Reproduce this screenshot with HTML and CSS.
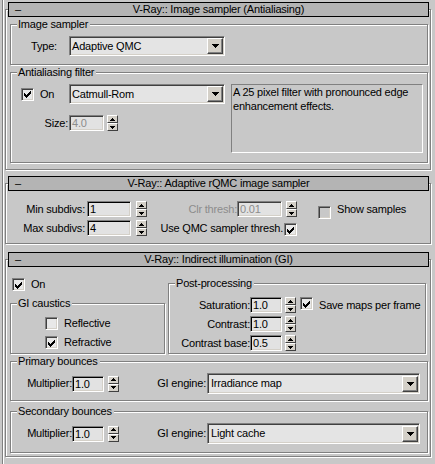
FILE: index.html
```html
<!DOCTYPE html>
<html>
<head>
<meta charset="utf-8">
<title>V-Ray</title>
<link rel="stylesheet" href="styles.css">
</head>
<body>
<div class="panel">

  <section class="rollout r1">
    <div class="rtitle"><span class="collapse">–</span><span class="rtext">V-Ray:: Image sampler (Antialiasing)</span><span></span></div>
    <div class="group g-is">
      <div class="legend">Image sampler</div>
      <div class="type-row">
        <span class="type-lbl">Type:</span>
        <div class="dropdown dd-aa"><span class="dd-text">Adaptive QMC</span><span class="dd-btn"><svg width="7" height="4" viewBox="0 0 7 4"><rect x="0" y="0" width="7" height="1"/><rect x="1" y="1" width="5" height="1"/><rect x="2" y="2" width="3" height="1"/><rect x="3" y="3" width="1" height="1"/></svg></span></div>
      </div>
    </div>
    <div class="group g-aa">
      <div class="legend">Antialiasing filter</div>
      <div class="aa-body">
        <div class="aa-grid">
          <div class="chk-row aa-on"><span class="cb"><svg class="check" width="7" height="7" viewBox="0 0 7 7"><rect x="0" y="2" width="1" height="3"/><rect x="1" y="3" width="1" height="3"/><rect x="2" y="4" width="1" height="3"/><rect x="3" y="3" width="1" height="3"/><rect x="4" y="2" width="1" height="3"/><rect x="5" y="1" width="1" height="3"/><rect x="6" y="0" width="1" height="3"/></svg></span><span class="cb-text">On</span></div>
          <div class="dropdown dd-aa"><span class="dd-text">Catmull-Rom</span><span class="dd-btn"><svg width="7" height="4" viewBox="0 0 7 4"><rect x="0" y="0" width="7" height="1"/><rect x="1" y="1" width="5" height="1"/><rect x="2" y="2" width="3" height="1"/><rect x="3" y="3" width="1" height="1"/></svg></span></div>
          <span class="flabel">Size:</span>
          <div class="spin-field">
            <span class="field f-size disabled">4.0</span>
            <span class="spinner ml3"><span class="sp"><svg width="5" height="3" viewBox="0 0 5 3"><rect x="2" y="0" width="1" height="1"/><rect x="1" y="1" width="3" height="1"/><rect x="0" y="2" width="5" height="1"/></svg></span><span class="sp"><svg width="5" height="3" viewBox="0 0 5 3"><rect x="0" y="0" width="5" height="1"/><rect x="1" y="1" width="3" height="1"/><rect x="2" y="2" width="1" height="1"/></svg></span></span>
          </div>
        </div>
        <div class="desc">A 25 pixel filter with pronounced edge<br>enhancement effects.</div>
      </div>
    </div>
  </section>

  <section class="rollout r2">
    <div class="rtitle"><span class="collapse">–</span><span class="rtext">V-Ray:: Adaptive rQMC image sampler</span><span></span></div>
    <div class="qmc">
      <div class="qrow">
        <span class="flabel w79">Min subdivs:</span>
        <span class="field f-sub">1</span>
        <span class="spinner ml5"><span class="sp"><svg width="5" height="3" viewBox="0 0 5 3"><rect x="2" y="0" width="1" height="1"/><rect x="1" y="1" width="3" height="1"/><rect x="0" y="2" width="5" height="1"/></svg></span><span class="sp"><svg width="5" height="3" viewBox="0 0 5 3"><rect x="0" y="0" width="5" height="1"/><rect x="1" y="1" width="3" height="1"/><rect x="2" y="2" width="1" height="1"/></svg></span></span>
        <span class="flabel w90 dis">Clr thresh:</span>
        <span class="field f-clr disabled">0.01</span>
        <span class="spinner ml4"><span class="sp"><svg width="5" height="3" viewBox="0 0 5 3"><rect x="2" y="0" width="1" height="1"/><rect x="1" y="1" width="3" height="1"/><rect x="0" y="2" width="5" height="1"/></svg></span><span class="sp"><svg width="5" height="3" viewBox="0 0 5 3"><rect x="0" y="0" width="5" height="1"/><rect x="1" y="1" width="3" height="1"/><rect x="2" y="2" width="1" height="1"/></svg></span></span>
        <span class="cb cb-off show-cb"></span><span class="cb-text">Show samples</span>
      </div>
      <div class="qrow">
        <span class="flabel w79">Max subdivs:</span>
        <span class="field f-sub">4</span>
        <span class="spinner ml5"><span class="sp"><svg width="5" height="3" viewBox="0 0 5 3"><rect x="2" y="0" width="1" height="1"/><rect x="1" y="1" width="3" height="1"/><rect x="0" y="2" width="5" height="1"/></svg></span><span class="sp"><svg width="5" height="3" viewBox="0 0 5 3"><rect x="0" y="0" width="5" height="1"/><rect x="1" y="1" width="3" height="1"/><rect x="2" y="2" width="1" height="1"/></svg></span></span>
        <span class="qmc-use"><span>Use QMC sampler thresh.</span><span class="cb use-cb"><svg class="check" width="7" height="7" viewBox="0 0 7 7"><rect x="0" y="2" width="1" height="3"/><rect x="1" y="3" width="1" height="3"/><rect x="2" y="4" width="1" height="3"/><rect x="3" y="3" width="1" height="3"/><rect x="4" y="2" width="1" height="3"/><rect x="5" y="1" width="1" height="3"/><rect x="6" y="0" width="1" height="3"/></svg></span></span>
      </div>
    </div>
  </section>

  <section class="rollout r3">
    <div class="rtitle"><span class="collapse">–</span><span class="rtext">V-Ray:: Indirect illumination (GI)</span><span></span></div>
    <div class="gi-top">
      <div class="gi-left">
        <div class="chk-row gi-on"><span class="cb"><svg class="check" width="7" height="7" viewBox="0 0 7 7"><rect x="0" y="2" width="1" height="3"/><rect x="1" y="3" width="1" height="3"/><rect x="2" y="4" width="1" height="3"/><rect x="3" y="3" width="1" height="3"/><rect x="4" y="2" width="1" height="3"/><rect x="5" y="1" width="1" height="3"/><rect x="6" y="0" width="1" height="3"/></svg></span><span class="cb-text">On</span></div>
        <div class="group g-caus">
          <div class="legend">GI caustics</div>
          <div class="chk-row caus-row first"><span class="cb"></span><span class="cb-text">Reflective</span></div>
          <div class="chk-row caus-row"><span class="cb"><svg class="check" width="7" height="7" viewBox="0 0 7 7"><rect x="0" y="2" width="1" height="3"/><rect x="1" y="3" width="1" height="3"/><rect x="2" y="4" width="1" height="3"/><rect x="3" y="3" width="1" height="3"/><rect x="4" y="2" width="1" height="3"/><rect x="5" y="1" width="1" height="3"/><rect x="6" y="0" width="1" height="3"/></svg></span><span class="cb-text">Refractive</span></div>
        </div>
      </div>
      <div class="group g-post">
        <div class="legend">Post-processing</div>
        <div class="prow first">
          <span class="flabel w81">Saturation:</span>
          <span class="field f-post">1.0</span>
          <span class="spinner ml3"><span class="sp"><svg width="5" height="3" viewBox="0 0 5 3"><rect x="2" y="0" width="1" height="1"/><rect x="1" y="1" width="3" height="1"/><rect x="0" y="2" width="5" height="1"/></svg></span><span class="sp"><svg width="5" height="3" viewBox="0 0 5 3"><rect x="0" y="0" width="5" height="1"/><rect x="1" y="1" width="3" height="1"/><rect x="2" y="2" width="1" height="1"/></svg></span></span>
          <span class="cb save-cb"><svg class="check" width="7" height="7" viewBox="0 0 7 7"><rect x="0" y="2" width="1" height="3"/><rect x="1" y="3" width="1" height="3"/><rect x="2" y="4" width="1" height="3"/><rect x="3" y="3" width="1" height="3"/><rect x="4" y="2" width="1" height="3"/><rect x="5" y="1" width="1" height="3"/><rect x="6" y="0" width="1" height="3"/></svg></span><span class="cb-text">Save maps per frame</span>
        </div>
        <div class="prow">
          <span class="flabel w81">Contrast:</span>
          <span class="field f-post">1.0</span>
          <span class="spinner ml3"><span class="sp"><svg width="5" height="3" viewBox="0 0 5 3"><rect x="2" y="0" width="1" height="1"/><rect x="1" y="1" width="3" height="1"/><rect x="0" y="2" width="5" height="1"/></svg></span><span class="sp"><svg width="5" height="3" viewBox="0 0 5 3"><rect x="0" y="0" width="5" height="1"/><rect x="1" y="1" width="3" height="1"/><rect x="2" y="2" width="1" height="1"/></svg></span></span>
        </div>
        <div class="prow">
          <span class="flabel w81">Contrast base:</span>
          <span class="field f-post">0.5</span>
          <span class="spinner ml3"><span class="sp"><svg width="5" height="3" viewBox="0 0 5 3"><rect x="2" y="0" width="1" height="1"/><rect x="1" y="1" width="3" height="1"/><rect x="0" y="2" width="5" height="1"/></svg></span><span class="sp"><svg width="5" height="3" viewBox="0 0 5 3"><rect x="0" y="0" width="5" height="1"/><rect x="1" y="1" width="3" height="1"/><rect x="2" y="2" width="1" height="1"/></svg></span></span>
        </div>
      </div>
    </div>

    <div class="group g-prim">
      <div class="legend">Primary bounces</div>
      <div class="brow">
        <span class="flabel w61">Multiplier:</span>
        <span class="field f-post">1.0</span>
        <span class="spinner ml4"><span class="sp"><svg width="5" height="3" viewBox="0 0 5 3"><rect x="2" y="0" width="1" height="1"/><rect x="1" y="1" width="3" height="1"/><rect x="0" y="2" width="5" height="1"/></svg></span><span class="sp"><svg width="5" height="3" viewBox="0 0 5 3"><rect x="0" y="0" width="5" height="1"/><rect x="1" y="1" width="3" height="1"/><rect x="2" y="2" width="1" height="1"/></svg></span></span>
        <span class="flabel w88">GI engine:</span>
        <div class="dropdown dd-gi"><span class="dd-text">Irradiance map</span><span class="dd-btn"><svg width="7" height="4" viewBox="0 0 7 4"><rect x="0" y="0" width="7" height="1"/><rect x="1" y="1" width="5" height="1"/><rect x="2" y="2" width="3" height="1"/><rect x="3" y="3" width="1" height="1"/></svg></span></div>
      </div>
    </div>

    <div class="group g-sec">
      <div class="legend">Secondary bounces</div>
      <div class="brow">
        <span class="flabel w61">Multiplier:</span>
        <span class="field f-post">1.0</span>
        <span class="spinner ml4"><span class="sp"><svg width="5" height="3" viewBox="0 0 5 3"><rect x="2" y="0" width="1" height="1"/><rect x="1" y="1" width="3" height="1"/><rect x="0" y="2" width="5" height="1"/></svg></span><span class="sp"><svg width="5" height="3" viewBox="0 0 5 3"><rect x="0" y="0" width="5" height="1"/><rect x="1" y="1" width="3" height="1"/><rect x="2" y="2" width="1" height="1"/></svg></span></span>
        <span class="flabel w88">GI engine:</span>
        <div class="dropdown dd-gi"><span class="dd-text">Light cache</span><span class="dd-btn"><svg width="7" height="4" viewBox="0 0 7 4"><rect x="0" y="0" width="7" height="1"/><rect x="1" y="1" width="5" height="1"/><rect x="2" y="2" width="3" height="1"/><rect x="3" y="3" width="1" height="1"/></svg></span></div>
      </div>
    </div>
  </section>

</div>
</body>
</html>
```

FILE: styles.css
```css
* { box-sizing: border-box; }

body {
  margin: 0;
  background: #c8c8c8;
  font-family: "Liberation Sans", Arial, sans-serif;
  font-size: 11px;
  letter-spacing: -0.2px;
  line-height: 13px;
  color: #000;
  overflow: hidden;
}

.panel {
  display: flex;
  flex-direction: column;
  height: 464px;
  margin-left: 2px;
  padding: 9px 0 0 2px;
  border-left: 1px solid #808080;
  box-shadow: inset 1px 0 0 #fff;
}

/* rollouts */
.rollout {
  flex: none;
  width: 426px;
  border: 1px solid #808080;
  box-shadow: 1px 1px 0 #fff, inset 1px 1px 0 #fff;
}
.r1 { padding-bottom: 6px; }
.r2 { margin-top: 13px; }
.r3 { margin-top: 15px; padding-bottom: 3px; }

.rtitle {
  display: grid;
  grid-template-columns: 1fr auto 1fr;
  height: 15px;
  margin: -8px 1px 0 2px;
  border: 1px solid #000;
  background: #b4b4b4;
  line-height: 13px;
  white-space: nowrap;
}
.collapse { padding-left: 6px; }

/* group boxes */
.group {
  border: 1px solid #808080;
  box-shadow: 1px 1px 0 #fff, inset 1px 1px 0 #fff;
  margin: 0 2px 0 4px;
}
.legend {
  width: max-content;
  height: 13px;
  margin: -7px 0 0 6px;
  padding: 0 2px 0 1px;
  background: #c8c8c8;
  white-space: nowrap;
}

/* controls */
.dropdown {
  display: flex;
  align-items: center;
  height: 20px;
  padding: 0 1px 0 2px;
  border: 1px solid;
  border-color: #808080 #fff #fff #808080;
  box-shadow: inset 1px 1px 0 #404040, inset -1px -1px 0 #d4d0c8;
  background: #e4e4e4;
  white-space: nowrap;
}
.dd-btn {
  margin-left: auto;
  width: 16px;
  height: 16px;
  display: flex;
  align-items: center;
  justify-content: center;
  background: #d4d0c8;
  border: 1px solid;
  border-color: #fff #404040 #404040 #fff;
  box-shadow: inset -1px -1px 0 #808080;
}
.dd-btn svg { display: block; fill: #000; }

.field {
  display: block;
  flex: none;
  height: 16px;
  padding-left: 2px;
  border: 1px solid;
  border-color: #808080 #fff #fff #808080;
  box-shadow: inset 1px 1px 0 #000, inset -1px -1px 0 #d4d0c8;
  background: #e2e2e2;
  line-height: 14px;
  white-space: nowrap;
}
.field.disabled { color: #8c8c8c; box-shadow: inset 1px 1px 0 #404040, inset -1px -1px 0 #d4d0c8; }

.spinner {
  display: flex;
  flex-direction: column;
  flex: none;
  width: 11px;
  height: 16px;
}
.sp {
  flex: 1;
  display: flex;
  align-items: center;
  justify-content: center;
  background: #d4d0c8;
  border: 1px solid;
  border-color: #fff #404040 #404040 #fff;
}
.sp svg { display: block; fill: #000; }

.ml3 { margin-left: 3px; }
.ml4 { margin-left: 4px; }
.ml5 { margin-left: 5px; }

.cb {
  display: flex;
  align-items: center;
  justify-content: center;
  flex: none;
  width: 13px;
  height: 13px;
  padding: 1px 1px 0 0;
  border: 1px solid;
  border-color: #808080 #fff #fff #808080;
  box-shadow: inset 1px 1px 0 #404040, inset -1px -1px 0 #d4d0c8;
  background: #e8e8e8;
}
.cb.cb-off { background: #c8c8c8; }
.check { display: block; fill: #000; }
.cb-text { margin-left: 6px; white-space: nowrap; }

.chk-row { display: flex; align-items: center; height: 13px; }

.flabel { flex: none; text-align: right; white-space: nowrap; }
.dis { color: #8c8c8c; }
.w61 { width: 61px; }
.w79 { width: 79px; }
.w81 { width: 81px; }
.w88 { width: 88px; }
.w90 { width: 90px; }

/* rollout 1 */
.g-is { margin-top: 7px; padding-bottom: 8px; }
.type-row { display: flex; align-items: center; margin-top: 5px; padding-left: 20px; }
.type-lbl { width: 38px; }
.dd-aa { width: 156px; }

.g-aa { margin-top: 7px; padding-bottom: 9px; }
.aa-body { display: flex; align-items: flex-start; margin-top: 5px; }
.aa-grid {
  display: grid;
  grid-template-columns: 58px 156px;
  grid-template-rows: 20px 16px;
  row-gap: 11px;
  align-items: center;
}
.aa-on { padding-left: 10px; }
.aa-grid .flabel { padding-right: 1px; }
.spin-field { display: flex; }
.f-size { width: 35px; }
.desc {
  width: 192px;
  height: 69px;
  margin-left: 6px;
  padding: 1px 0 0 1px;
  border: 1px solid;
  border-color: #808080 #fff #fff #808080;
  line-height: 13.5px;
  white-space: nowrap;
}

/* rollout 2 */
.qmc { display: flex; flex-direction: column; row-gap: 3px; margin-top: 10px; padding-bottom: 7px; }
.qrow { display: flex; align-items: center; height: 16px; }
.qrow .w79 + .field { margin-left: 2px; }
.f-sub { width: 44px; }
.f-clr { width: 45px; }
.show-cb { margin-left: 21px; align-self: flex-start; margin-top: 5px; }
.qmc-use {
  display: flex;
  align-items: center;
  justify-content: flex-end;
  width: 150px;
  height: 16px;
  white-space: nowrap;
}
.use-cb { margin-left: 1px; align-self: flex-end; }

/* rollout 3 */
.gi-top { display: flex; }
.gi-left { display: flex; flex-direction: column; width: 160px; flex: none; }
.gi-on { margin: 11px 0 0 6px; }
.g-caus { flex: 1; margin: 12px 1px 0 4px; }
.caus-row { margin: 6px 0 0 34px; }
.caus-row.first { margin-top: 7px; }

.g-post { flex: 1; margin: 16px 4px 0 2px; padding-bottom: 2px; }
.prow { display: flex; align-items: center; height: 16px; margin-top: 3px; }
.prow.first { margin-top: 7px; }
.f-post { width: 32px; }
.save-cb { margin-left: 4px; align-self: flex-start; }

.g-prim { margin-top: 7px; padding-bottom: 6px; }
.g-sec { margin-top: 10px; padding-bottom: 8px; }
.brow { display: flex; align-items: center; height: 21px; margin-top: 5px; }
.dd-gi { width: 213px; height: 21px; padding-left: 3px; }
.brow .w88 { padding-right: 1px; }
```
